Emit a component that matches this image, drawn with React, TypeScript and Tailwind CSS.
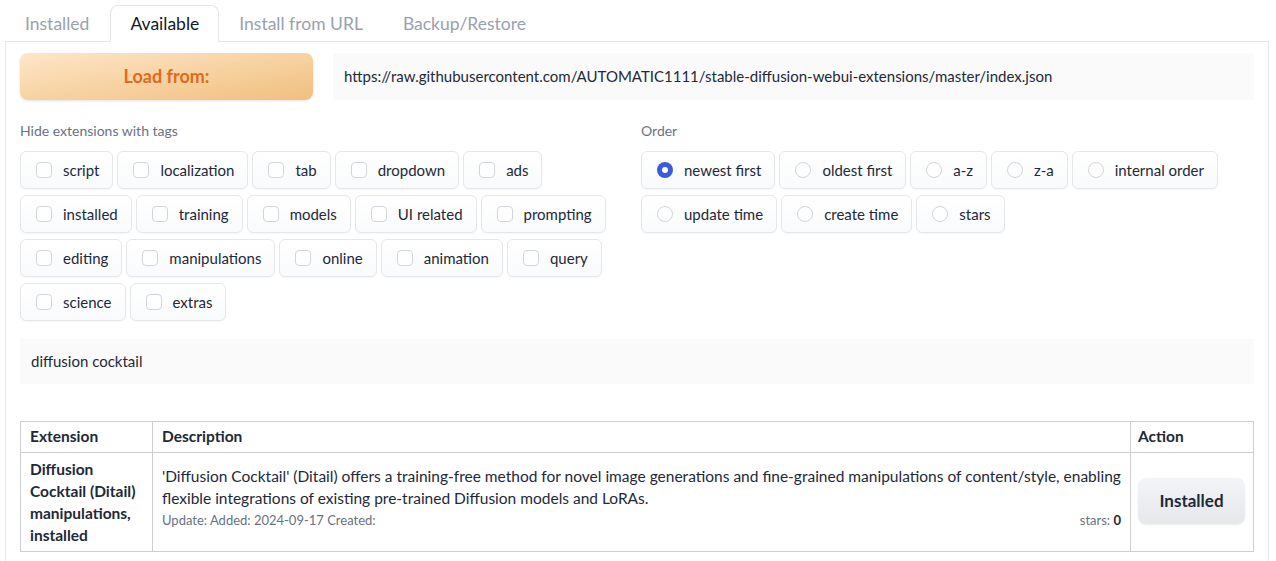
import React from 'react'

const TAG_ROWS = [
  ['script', 'localization', 'tab', 'dropdown', 'ads'],
  ['installed', 'training', 'models', 'UI related', 'prompting'],
  ['editing', 'manipulations', 'online', 'animation', 'query'],
  ['science', 'extras'],
]

const ORDER_ROWS = [
  ['newest first', 'oldest first', 'a-z', 'z-a', 'internal order'],
  ['update time', 'create time', 'stars'],
]

const TABS = ['Installed', 'Available', 'Install from URL', 'Backup/Restore']

const chip =
  'flex items-center h-[38px] pl-[15px] pr-[13px] rounded-md border border-gray-200 bg-gradient-to-b from-white to-gray-50 shadow-[0_1px_2px_rgba(0,0,0,0.04)] text-[15px] text-gray-800'

const Checkbox = () => (
  <span className="w-4 h-4 rounded-[4px] border border-gray-300 bg-white mr-[11px]" />
)

const Radio = ({ on }: { on: boolean }) =>
  on ? (
    <span className="w-4 h-4 rounded-full bg-[#3b5bdb] flex items-center justify-center mr-[11px]">
      <span className="w-[6px] h-[6px] rounded-full bg-white" />
    </span>
  ) : (
    <span className="w-4 h-4 rounded-full border border-gray-300 bg-white mr-[11px]" />
  )

export default function App() {
  return (
    <div className="min-h-screen bg-white text-gray-800 pl-[5px] pr-[7px] pt-[5px]" style={{ fontFamily: 'Lato, sans-serif' }}>
      {/* tabs */}
      <div className="flex h-[36px] items-end">
        {TABS.map((t) => (
          <div
            key={t}
            className={
              t === 'Available'
                ? 'h-[37px] -mb-px ml-[1px] px-[19px] pt-[2px] flex items-center rounded-t-lg border border-gray-200 border-b-white bg-white text-[17.5px] text-gray-900 relative z-10'
                : 'h-[36px] px-[20px] pt-[2px] flex items-center text-[17.5px] text-gray-400'
            }
          >
            {t}
          </div>
        ))}
      </div>

      <div className="border border-gray-200 px-[14px] pt-[11px] pb-4 min-h-[520px]">
        <div className="flex gap-5">
          <button className="w-[293px] h-[47px] rounded-lg bg-gradient-to-br from-[#fde6c8] to-[#f0bf7c] shadow-[0_1px_3px_rgba(0,0,0,0.12)] text-[18px] font-bold text-[#e06a1e]">
            Load from:
          </button>
          <div className="flex-1 h-[47px] bg-[#fafafa] flex items-center px-[11px] text-[15px] text-gray-800">
            https://raw.githubusercontent.com/AUTOMATIC1111/stable-diffusion-webui-extensions/master/index.json
          </div>
        </div>

        <div className="flex mt-[20px]">
          <div className="w-[621px]">
            <div className="text-[14px] text-gray-500 mb-[10px]">Hide extensions with tags</div>
            <div className="flex flex-col gap-[6px]">
              {TAG_ROWS.map((row, i) => (
                <div key={i} className="flex gap-1">
                  {row.map((t) => (
                    <label key={t} className={chip}>
                      <Checkbox />
                      {t}
                    </label>
                  ))}
                </div>
              ))}
            </div>
          </div>
          <div className="flex-1">
            <div className="text-[14px] text-gray-500 mb-[10px]">Order</div>
            <div className="flex flex-col gap-[6px]">
              {ORDER_ROWS.map((row, i) => (
                <div key={i} className="flex gap-1">
                  {row.map((o) => (
                    <label key={o} className={chip}>
                      <Radio on={o === 'newest first'} />
                      {o}
                    </label>
                  ))}
                </div>
              ))}
            </div>
          </div>
        </div>

        <div className="mt-[18px] h-[45px] bg-[#fafafa] flex items-center px-[11px] text-[15px] text-gray-800">
          diffusion cocktail
        </div>

        <table className="mt-[37px] w-full border-collapse text-[15.5px] text-gray-800">
          <thead>
            <tr className="h-[31px]">
              <th className="border border-[#cfcfcf] text-left font-bold px-[9px] w-[132px]">Extension</th>
              <th className="border border-[#cfcfcf] text-left font-bold px-[9px]">Description</th>
              <th className="border border-[#cfcfcf] text-left font-bold px-[7px] w-[123px]">Action</th>
            </tr>
          </thead>
          <tbody>
            <tr>
              <td className="border border-[#cfcfcf] px-[9px] py-[5px] align-top font-bold leading-[22px]">
                Diffusion Cocktail (Ditail) manipulations, installed
              </td>
              <td className="border border-[#cfcfcf] px-[9px] pt-[12px] pb-[5px] align-top leading-[22px]">
                'Diffusion Cocktail' (Ditail) offers a training-free method for novel image generations and fine-grained
                manipulations of content/style, enabling flexible integrations of existing pre-trained Diffusion models and
                LoRAs.
                <div className="flex justify-between text-[13px] text-gray-500 leading-[22px]">
                  <span>Update: Added: 2024-09-17 Created:</span>
                  <span>
                    stars: <b className="text-gray-800">0</b>
                  </span>
                </div>
              </td>
              <td className="border border-[#cfcfcf] px-[7px] align-middle">
                <button className="w-[107px] h-[46px] -mt-[3px] rounded-lg bg-gradient-to-b from-gray-100 to-gray-200 shadow-[0_1px_2px_rgba(0,0,0,0.08)] text-[17px] font-bold text-gray-800">
                  Installed
                </button>
              </td>
            </tr>
          </tbody>
        </table>
      </div>
    </div>
  )
}
